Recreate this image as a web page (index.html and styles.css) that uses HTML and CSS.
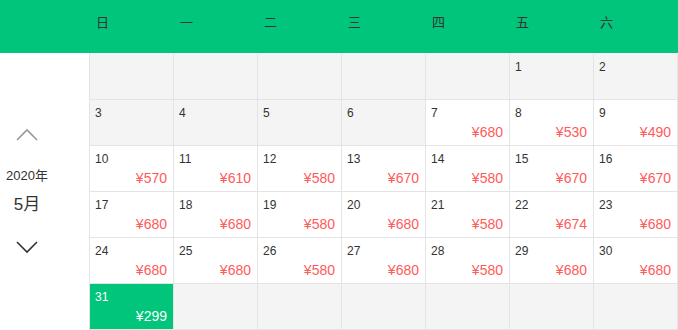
FILE: index.html
```html
<!DOCTYPE html>
<html>

<head>
    <meta charset="UTF-8">
    <title>价格日历</title>
    <link rel="stylesheet" href="styles.css">
</head>

<body>
    <div class="week-bar">
        <div class="week-spacer"></div>
        <div class="week-day">日</div>
        <div class="week-day">一</div>
        <div class="week-day">二</div>
        <div class="week-day">三</div>
        <div class="week-day">四</div>
        <div class="week-day">五</div>
        <div class="week-day">六</div>
    </div>

    <div class="calendar">
        <div class="month-nav">
            <svg class="arrow arrow-up" width="22" height="13" viewBox="0 0 22 13">
                <polyline points="1,12 11,2 21,12" fill="none" stroke="currentColor" stroke-width="1.6"/>
            </svg>
            <div class="year">2020年</div>
            <div class="month">5月</div>
            <svg class="arrow arrow-down" width="22" height="13" viewBox="0 0 22 13">
                <polyline points="1,1 11,11 21,1" fill="none" stroke="currentColor" stroke-width="1.6"/>
            </svg>
        </div>

        <div class="days" id="days"></div>
    </div>

    <script>
        // 5月价格，1号是周五
        const prices = {
            7: 680, 8: 530, 9: 490,
            10: 570, 11: 610, 12: 580, 13: 670, 14: 580, 15: 670, 16: 670,
            17: 680, 18: 680, 19: 580, 20: 680, 21: 580, 22: 674, 23: 680,
            24: 680, 25: 680, 26: 580, 27: 680, 28: 580, 29: 680, 30: 680,
            31: 299
        };
        const firstWeekday = 5;
        const total = 42;
        const days = document.getElementById('days');

        for (let i = 0; i < total; i++) {
            const day = i - firstWeekday + 1;
            const cell = document.createElement('div');
            cell.className = 'day';
            if (day >= 1 && day <= 31) {
                const num = document.createElement('div');
                num.className = 'day-num';
                num.textContent = day;
                cell.appendChild(num);
                if (prices[day]) {
                    const price = document.createElement('div');
                    price.className = 'day-price';
                    price.textContent = '¥' + prices[day];
                    cell.appendChild(price);
                } else {
                    cell.classList.add('disabled');
                }
                if (day === 31) {
                    cell.classList.add('selected');
                }
            } else {
                cell.classList.add('disabled');
            }
            days.appendChild(cell);
        }
    </script>
</body>

</html>
```

FILE: styles.css
```css
:root {
    --green: #00c57a;
    --line: #e4e4e4;
    --gray-bg: #f4f4f4;
    --price: #ff5a5a;
}

body {
    margin: 0;
    font-family: "Liberation Sans", "Noto Sans CJK SC", sans-serif;
    color: #333;
    background: white;
}

.week-bar {
    display: grid;
    grid-template-columns: 89px repeat(7, 84px);
    height: 53px;
    background-color: var(--green);
}

.week-day {
    padding: 12px 0 0 7px;
    font-size: 13px;
    color: #333;
}

.calendar {
    display: flex;
}

.month-nav {
    width: 89px;
    display: flex;
    flex-direction: column;
    align-items: center;
    padding: 75px 35px 0 0;
    box-sizing: border-box;
}

.arrow {
    display: block;
}

.arrow-up {
    color: #999;
}

.arrow-down {
    color: #333;
    margin-top: 26px;
}

.year {
    margin-top: 27px;
    font-size: 13px;
    line-height: 16px;
    white-space: nowrap;
}

.month {
    margin-top: 11px;
    font-size: 17px;
    line-height: 20px;
    white-space: nowrap;
}

.days {
    display: grid;
    grid-template-columns: repeat(7, 84px);
    grid-auto-rows: 46px;
    border-left: 1px solid var(--line);
    border-top: 1px solid var(--gray-bg);
}

.day {
    box-sizing: border-box;
    border-right: 1px solid var(--line);
    border-bottom: 1px solid var(--line);
    padding: 6px 6px 0 5px;
    display: flex;
    flex-direction: column;
}

.day.disabled {
    background-color: var(--gray-bg);
}

.day.selected {
    background-color: var(--green);
    color: white;
}

.day-num {
    font-size: 12px;
    line-height: 14px;
}

.day-price {
    margin-top: 4px;
    font-size: 14px;
    line-height: 17px;
    text-align: right;
    color: var(--price);
}

.day.selected .day-price {
    color: white;
}
```
